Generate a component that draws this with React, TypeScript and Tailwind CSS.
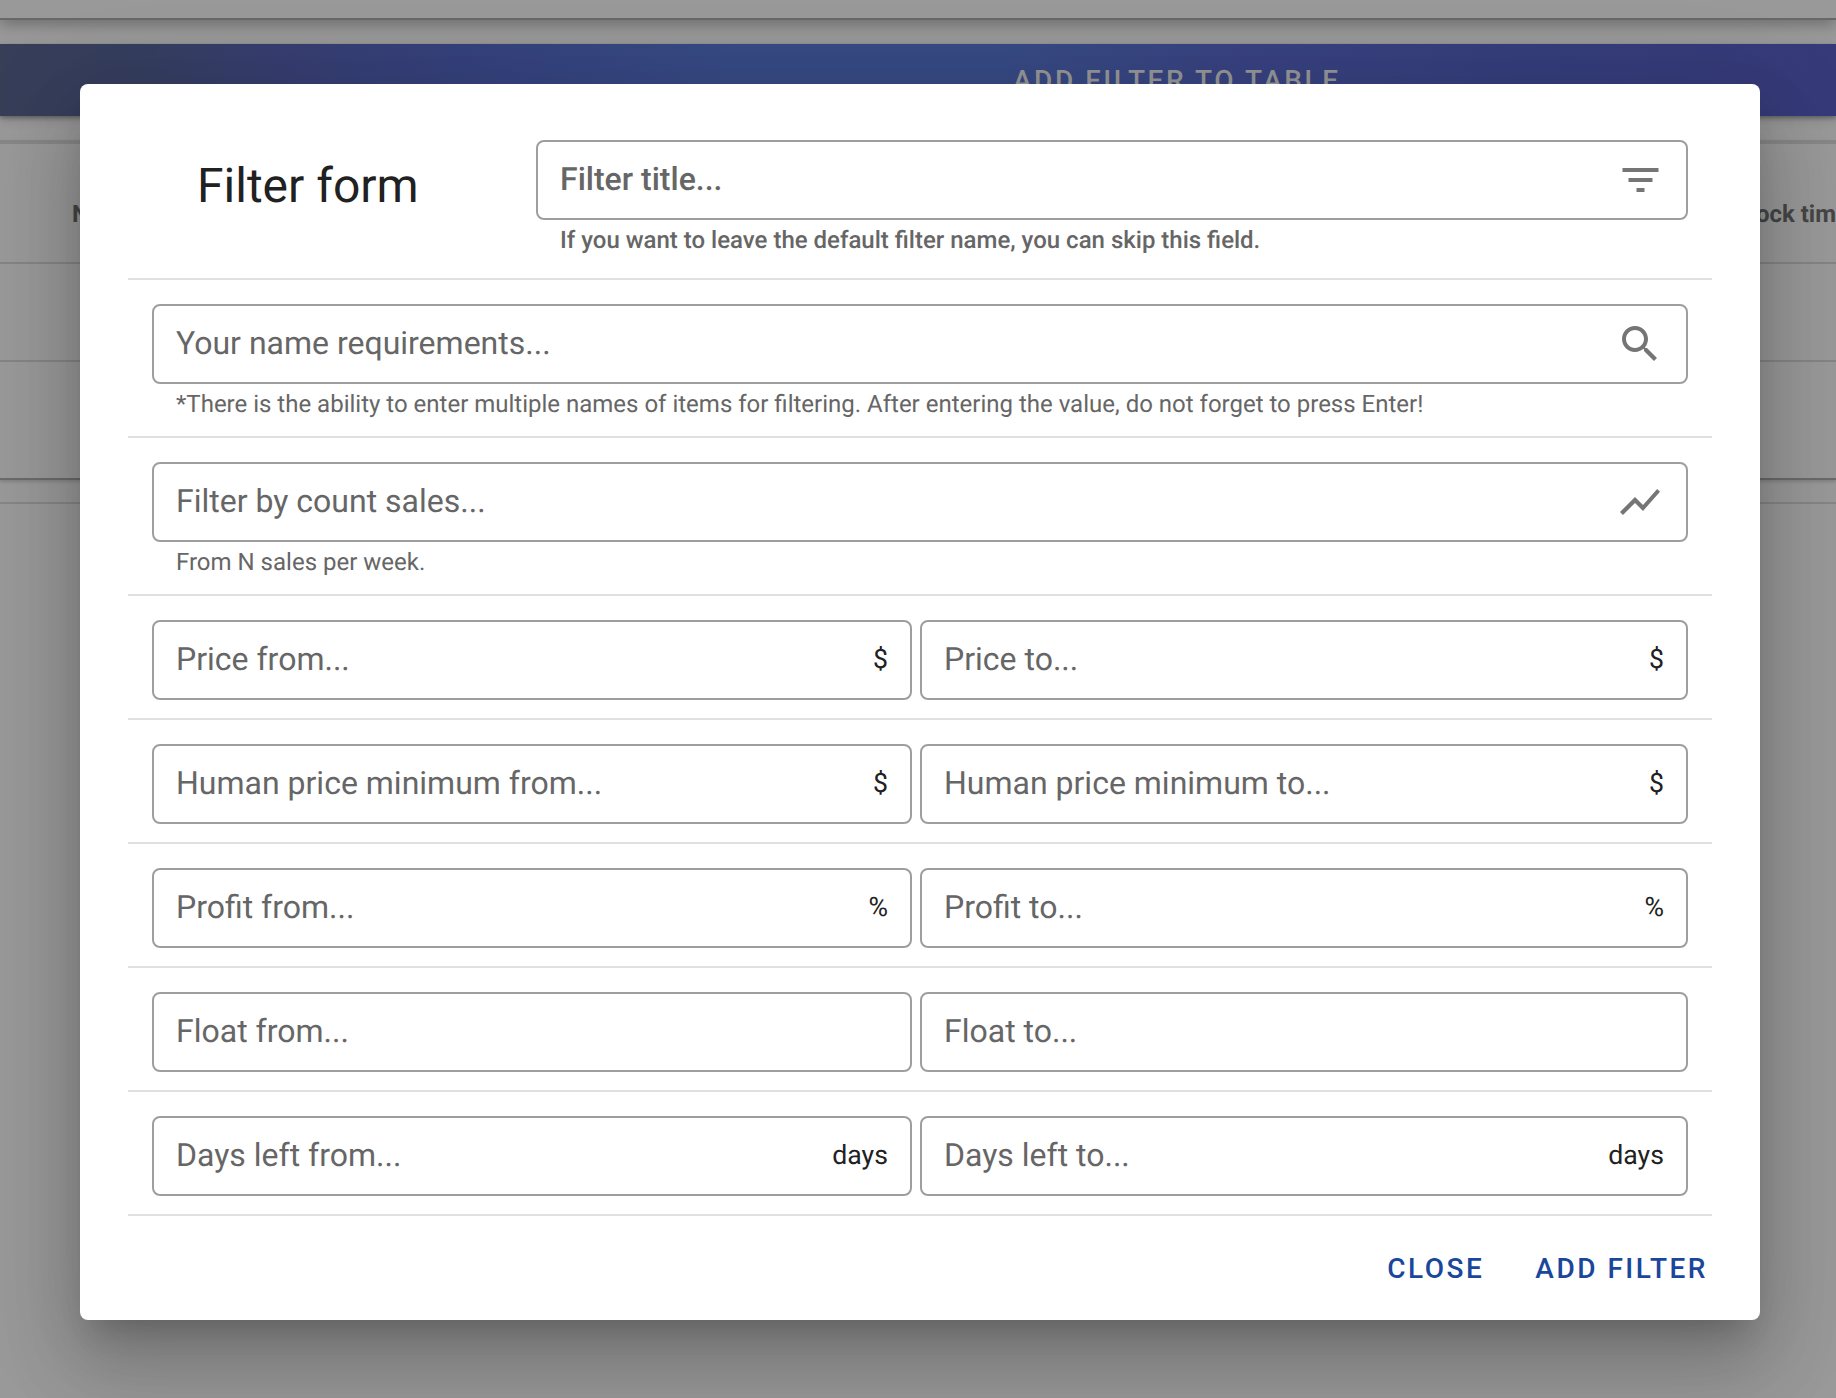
import type { ReactNode } from "react";

const icons = {
  filter: { box: "-0.25 0 24 24", d: "M10 18h4v-2h-4v2zM3 6v2h18V6H3zm3 7h12v-2H6v2z" },
  search: {
    box: "0 0 24 24",
    d: "M15.5 14h-.79l-.28-.27C15.41 12.59 16 11.11 16 9.5 16 5.91 13.09 3 9.5 3S3 5.91 3 9.5 5.91 16 9.5 16c1.61 0 3.09-.59 4.23-1.57l.27.28v.79l5 4.99L20.49 19l-4.99-5zm-6 0C7.01 14 5 11.99 5 9.5S7.01 5 9.5 5 14 7.01 14 9.5 11.99 14 9.5 14z",
  },
  chart: { box: "0 0 24 24", d: "M3.5 18.49l6-6.01 4 4L22 6.92l-1.41-1.41-7.09 7.97-4-4L2 16.99z" },
};

function Icon({ name }: { name: keyof typeof icons }) {
  return (
    <svg viewBox={icons[name].box} className="size-12 shrink-0 fill-[#757575]">
      <path d={icons[name].d} />
    </svg>
  );
}

function Field({ label, end, className = "" }: { label: string; end?: ReactNode; className?: string }) {
  return (
    <div
      className={`flex h-20 items-center justify-between rounded-lg border-2 border-[#9e9e9e] px-[22px] text-[32px] text-[#666] ${className}`}
    >
      <span className="-mt-0.5 leading-10 whitespace-nowrap">{label}</span>
      {end}
    </div>
  );
}

function Helper({ children }: { children: ReactNode }) {
  return <p className="h-[34px] pl-6 text-2xl leading-[40px] whitespace-nowrap text-[#666]">{children}</p>;
}

function Unit({ children }: { children: string }) {
  return <span className="-mt-0.5 text-[26.667px] leading-8 text-[#212121]">{children}</span>;
}

const ranges = [
  { name: "Price", unit: "$" },
  { name: "Human price minimum", unit: "$" },
  { name: "Profit", unit: "%" },
  { name: "Float", unit: "" },
  { name: "Days left", unit: "days" },
];

function Page() {
  return (
    <div className="flex h-full flex-col">
      <div className="z-10 h-5 shrink-0 border-b-2 border-[#686868] bg-[#999] shadow-[0_4px_16px_rgba(0,0,0,0.3)]" />
      <div className="mt-6 h-[72px] shrink-0 bg-[linear-gradient(90deg,#363e58_0%,#363e60_8%,#373e70_15%,#35417c_25%,#374a84_40%,#374a84_54%,#384280_68%,#353e7b_82%,#363a79_100%)] pt-[17px] pl-[1013px] text-[28px] leading-10 font-medium tracking-[0.091em] whitespace-nowrap text-[#969696] shadow-[0_2px_4px_rgba(0,0,0,0.3),0_4px_10px_rgba(0,0,0,0.12)]">
        ADD FILTER TO TABLE
      </div>
      <div className="mt-6 flex h-[340px] shrink-0 flex-col border-t-4 border-b-2 border-t-[#878787] border-b-[#6b6b6b] shadow-[0_2px_3px_rgba(0,0,0,0.15)]">
        <div className="flex h-[120px] items-center justify-between border-b-2 border-[#858585] pt-[22px] pl-[72px] text-2xl font-bold whitespace-nowrap text-[#464646]">
          <span>Name</span>
          <span>Lock tim</span>
        </div>
        <div className="h-[98px] border-b-2 border-[#858585]" />
      </div>
      <div className="mt-[22px] h-0.5 shrink-0 bg-[#868686]" />
    </div>
  );
}

export default function App() {
  return (
    <div className="relative h-[1398px] w-[1836px] overflow-hidden bg-[#999] font-['Roboto',sans-serif] [text-rendering:geometricPrecision]">
      <Page />
      <div
        role="dialog"
        className="absolute top-[84px] left-20 z-20 flex h-[1236px] w-[1680px] flex-col rounded-lg bg-white px-12 pt-14 shadow-[0_22px_30px_-14px_rgba(0,0,0,0.2),0_48px_76px_6px_rgba(0,0,0,0.14),0_18px_92px_16px_rgba(0,0,0,0.12)]"
      >
        <header className="flex h-[140px] border-b-2 border-[#e0e0e0] pr-6 pl-[69px]">
          <h1 className="w-[339px] pt-[18px] text-5xl leading-[56px] text-[#212121]">Filter form</h1>
          <div className="flex-1 font-medium">
            <Field label="Filter title..." end={<Icon name="filter" />} />
            <Helper>If you want to leave the default filter name, you can skip this field.</Helper>
          </div>
        </header>
        <section className="h-[158px] border-b-2 border-[#e0e0e0] px-6 pt-6">
          <Field label="Your name requirements..." end={<Icon name="search" />} />
          <Helper>
            *There is the ability to enter multiple names of items for filtering. After entering the value, do not
            forget to press Enter!
          </Helper>
        </section>
        <section className="h-[158px] border-b-2 border-[#e0e0e0] px-6 pt-6">
          <Field label="Filter by count sales..." end={<Icon name="chart" />} />
          <Helper>From N sales per week.</Helper>
        </section>
        {ranges.map(({ name, unit }) => (
          <section key={name} className="flex h-[124px] gap-2 border-b-2 border-[#e0e0e0] px-6 pt-6">
            <Field label={`${name} from...`} end={unit && <Unit>{unit}</Unit>} className="w-[760px]" />
            <Field label={`${name} to...`} end={unit && <Unit>{unit}</Unit>} className="flex-1" />
          </section>
        ))}
        <footer className="flex flex-1 items-center justify-end gap-[51px] pt-0.5 pr-1 text-[28px] font-medium text-[#1a469c]">
          <button className="tracking-[0.0892857em]">CLOSE</button>
          <button className="tracking-[0.0892857em]">ADD FILTER</button>
        </footer>
      </div>
    </div>
  );
}
